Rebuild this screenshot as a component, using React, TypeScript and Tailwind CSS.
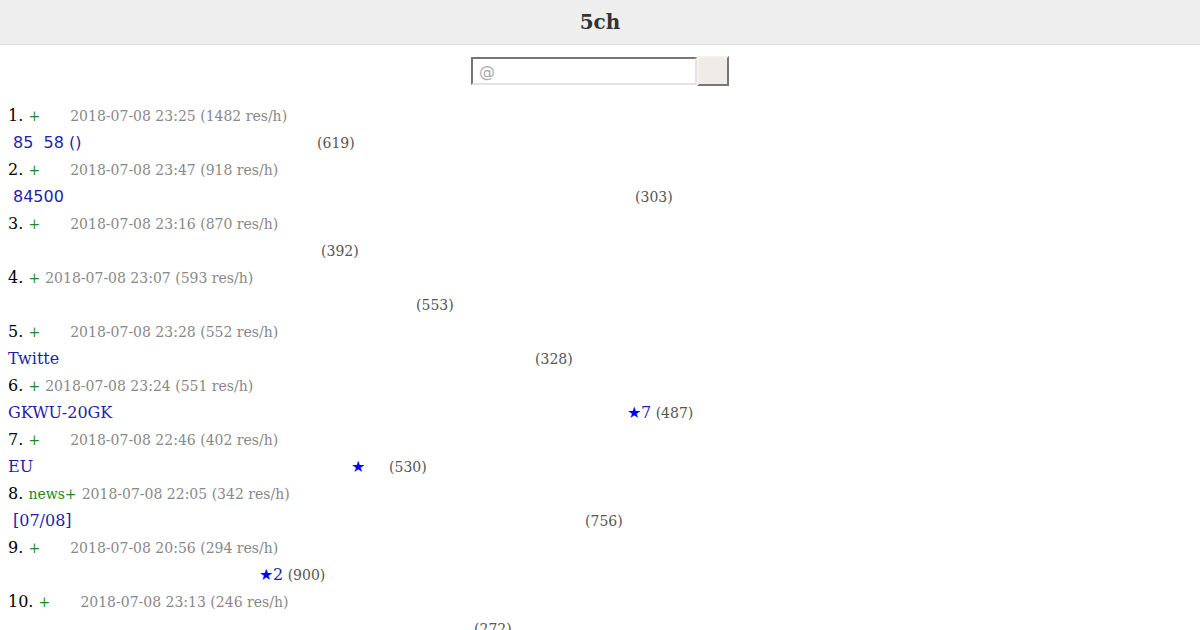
import React from "react";

type Row = {
  n: number;
  board: string;
  gap: boolean;
  date: string;
  rate: number;
  title: string;
  indent?: boolean;
  sans?: boolean;
  titleW: string;
  star?: string;
  starW?: string;
  count: number;
};

const rows: Row[] = [
  { n: 1, board: "+", gap: true, date: "2018-07-08 23:25", rate: 1482, title: "85  58 ()", indent: true, sans: true, titleW: "w-[309px]", count: 619 },
  { n: 2, board: "+", gap: true, date: "2018-07-08 23:47", rate: 918, title: "84500", indent: true, sans: true, titleW: "w-[627px]", count: 303 },
  { n: 3, board: "+", gap: true, date: "2018-07-08 23:16", rate: 870, title: "", titleW: "w-[313px]", count: 392 },
  { n: 4, board: "+", gap: false, date: "2018-07-08 23:07", rate: 593, title: "", titleW: "w-[408px]", count: 553 },
  { n: 5, board: "+", gap: true, date: "2018-07-08 23:28", rate: 552, title: "Twitte", titleW: "w-[527px]", count: 328 },
  { n: 6, board: "+", gap: false, date: "2018-07-08 23:24", rate: 551, title: "GKWU-20GK", titleW: "w-[619px]", star: "7", count: 487 },
  { n: 7, board: "+", gap: true, date: "2018-07-08 22:46", rate: 402, title: "EU", titleW: "w-[343px]", star: "", starW: "w-[38px]", count: 530 },
  { n: 8, board: "news+", gap: false, date: "2018-07-08 22:05", rate: 342, title: "[07/08]", indent: true, titleW: "w-[577px]", count: 756 },
  { n: 9, board: "+", gap: true, date: "2018-07-08 20:56", rate: 294, title: "", titleW: "w-[251px]", star: "2", count: 900 },
  { n: 10, board: "+", gap: true, date: "2018-07-08 23:13", rate: 246, title: "", titleW: "w-[466px]", count: 272 },
];

export default function App() {
  return (
    <div className="w-[1200px] h-[630px] overflow-hidden bg-white text-black font-['DejaVu_Serif',serif]">
      {/* header */}
      <div className="h-[45px] bg-[#eeeeee] border-b border-[#dddddd] flex items-center justify-center">
        <h1 className="text-[20px] font-bold text-[#333333] leading-none">5ch</h1>
      </div>

      {/* search */}
      <div className="flex justify-center pt-[11px]">
        <div className="flex items-start">
          <input
            type="text"
            placeholder="@"
            className="mt-[1px] w-[226px] h-[28px] border-2 border-t-[#767676] border-l-[#767676] border-b-[#e3e3e3] border-r-[#e3e3e3] bg-white px-[6px] text-[16px] font-['DejaVu_Sans',sans-serif] placeholder:text-[#aaaaaa] outline-none"
          />
          <button className="w-[32px] h-[30px] bg-[#efebe7] border-2 border-t-[#f4f2ef] border-l-[#f4f2ef] border-b-[#767676] border-r-[#767676]" />
        </div>
      </div>

      {/* thread list */}
      <div className="mt-[16px] px-[8px]">
        {rows.map((r) => (
          <div key={r.n}>
            <div className="h-[27px] leading-[27px] whitespace-nowrap">
              <span className="text-[16px]">{r.n}.</span>{" "}
              <span className="text-[14px] text-[#228822]">{r.board}</span>{" "}
              {r.gap && <span className="inline-block w-[25px]" />}
              <span className="text-[14px] text-[#888888]">
                {r.date} ({r.rate} res/h)
              </span>
            </div>
            <div className="h-[27px] leading-[27px] whitespace-nowrap">
              <a
                className={`inline-block ${r.titleW} text-[16px] text-[#1f1fa8] whitespace-pre ${r.indent ? "pl-[5px]" : ""} ${r.sans ? "font-['DejaVu_Sans',sans-serif]" : ""}`}
              >
                {r.title}
              </a>
              {r.star !== undefined && (
                <span className={`inline-block ${r.starW ?? ""} text-[16px]`}>
                  <span className="text-[#0000ff]">★</span>
                  <span className="text-[#1f1fa8]">{r.star}</span>
                </span>
              )}
              {r.star !== undefined && !r.starW && <span className="text-[14px]"> </span>}
              <span className="text-[14px] text-[#555555]">({r.count})</span>
            </div>
          </div>
        ))}
      </div>
    </div>
  );
}
